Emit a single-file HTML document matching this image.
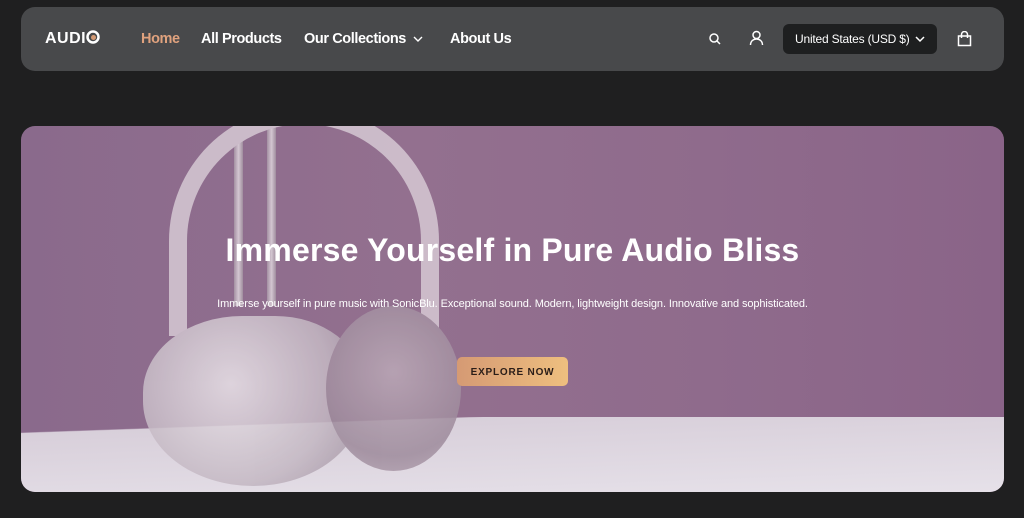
<!DOCTYPE html>
<html><head><style>
*{margin:0;padding:0;box-sizing:border-box}
body{width:1024px;height:518px;background:#1f1f20;font-family:"Liberation Sans",sans-serif;position:relative;overflow:hidden}
.nav{position:absolute;left:21px;top:7px;width:983px;height:64px;background:#48494b;border-radius:14px}
.nav span{position:absolute;top:24px;font-weight:bold;font-size:14.5px;color:#fff;letter-spacing:-0.4px}
.logo{left:24px;font-size:16px!important;top:23px!important;letter-spacing:0.5px!important}
.cur{position:absolute;left:762px;top:17px;width:154px;height:30px;background:#1e1f20;border-radius:6px;color:#fff;font-size:12px;padding:8px 0 0 12px;letter-spacing:-0.2px}
.hero{position:absolute;left:21px;top:126px;width:983px;height:366px;border-radius:14px;overflow:hidden;
background:linear-gradient(90deg,#8a6a8c 0%,#93708f 40%,#8f6b8c 70%,#8a6488 100%)}
.table{position:absolute;left:0;right:0;bottom:0;height:75px;background:linear-gradient(178deg,transparent 0 14%,#d8cfda 15%,#e6e1e9 100%)}
h1{position:absolute;left:0;width:983px;top:106px;text-align:center;color:#fff;font-size:32px;font-weight:bold;letter-spacing:0.2px}
p{position:absolute;left:0;width:983px;top:172px;text-align:center;color:#fff;font-size:11px;letter-spacing:-0.1px}
.btn{position:absolute;left:436px;top:231px;width:111px;height:29px;border-radius:5px;background:linear-gradient(90deg,#d59a74,#eebf7f);color:#2a1d18;font-size:10px;font-weight:bold;letter-spacing:.8px;text-align:center;padding-top:10px}
.hp{opacity:.85}
</style></head><body>
<div class="nav">
<span class="logo">AUDI<svg width="14" height="14" viewBox="0 0 14 14" style="vertical-align:-1px"><circle cx="7" cy="7" r="5.5" fill="none" stroke="#fff" stroke-width="2.5"/><circle cx="7.5" cy="7.5" r="2.5" fill="#d59a74"/></svg></span>
<span style="left:120px;color:#e0a27e">Home</span>
<span style="left:180px">All Products</span>
<span style="left:283px">Our Collections</span>
<svg style="position:absolute;left:392px;top:28px" width="10" height="8" viewBox="0 0 10 8"><path d="M1 2l4 4 4-4" stroke="#fff" stroke-width="1.4" fill="none"/></svg>
<span style="left:429px">About Us</span>
<svg style="position:absolute;left:687px;top:25px" width="14" height="14" viewBox="0 0 14 14"><circle cx="6" cy="6" r="4" stroke="#fff" stroke-width="1.5" fill="none"/><path d="M9 9l3 3" stroke="#fff" stroke-width="1.5"/></svg>
<svg style="position:absolute;left:728px;top:23px" width="15" height="16" viewBox="0 0 15 16"><circle cx="7.5" cy="5" r="3.5" stroke="#fff" stroke-width="1.5" fill="none"/><path d="M1.5 15c0-4 3-6 6-6s6 2 6 6" stroke="#fff" stroke-width="1.5" fill="none"/></svg>
<div class="cur">United States (USD $)<svg style="position:absolute;right:12px;top:11px" width="10" height="8" viewBox="0 0 10 8"><path d="M1 2l4 4 4-4" stroke="#fff" stroke-width="1.5" fill="none"/></svg></div>
<svg style="position:absolute;left:936px;top:24px" width="15" height="16" viewBox="0 0 15 16"><rect x="1.5" y="5" width="12" height="9.5" stroke="#fff" stroke-width="1.5" fill="none"/><path d="M4.5 7V3.5a3 3 0 016 0V7" stroke="#fff" stroke-width="1.5" fill="none"/></svg>
</div>
<div class="hero">
<div class="table"></div>
<div class="hp">
<div style="position:absolute;left:213px;top:0;width:9px;height:180px;background:linear-gradient(90deg,#a896a6,#e0d6de,#a393a1)"></div>
<div style="position:absolute;left:246px;top:0;width:9px;height:180px;background:linear-gradient(90deg,#a896a6,#e0d6de,#a393a1)"></div>
<div style="position:absolute;left:148px;top:-20px;width:270px;height:230px;border:18px solid #d6c9d4;border-bottom:none;border-radius:140px 140px 0 0"></div>
<div style="position:absolute;left:122px;top:190px;width:220px;height:170px;border-radius:45% 40% 50% 50%;background:radial-gradient(circle at 40% 40%,#ebe5ea,#c4b8c3 60%,#9a8a9a)"></div>
<div style="position:absolute;left:305px;top:180px;width:135px;height:165px;border-radius:50%;background:radial-gradient(circle at 50% 40%,#bcaab8,#9d8a9b 70%,#b6a5b3)"></div>
</div>
<h1>Immerse Yourself in Pure Audio Bliss</h1>
<p>Immerse yourself in pure music with SonicBlu. Exceptional sound. Modern, lightweight design. Innovative and sophisticated.</p>
<div class="btn">EXPLORE NOW</div>
</div>
</body></html>
